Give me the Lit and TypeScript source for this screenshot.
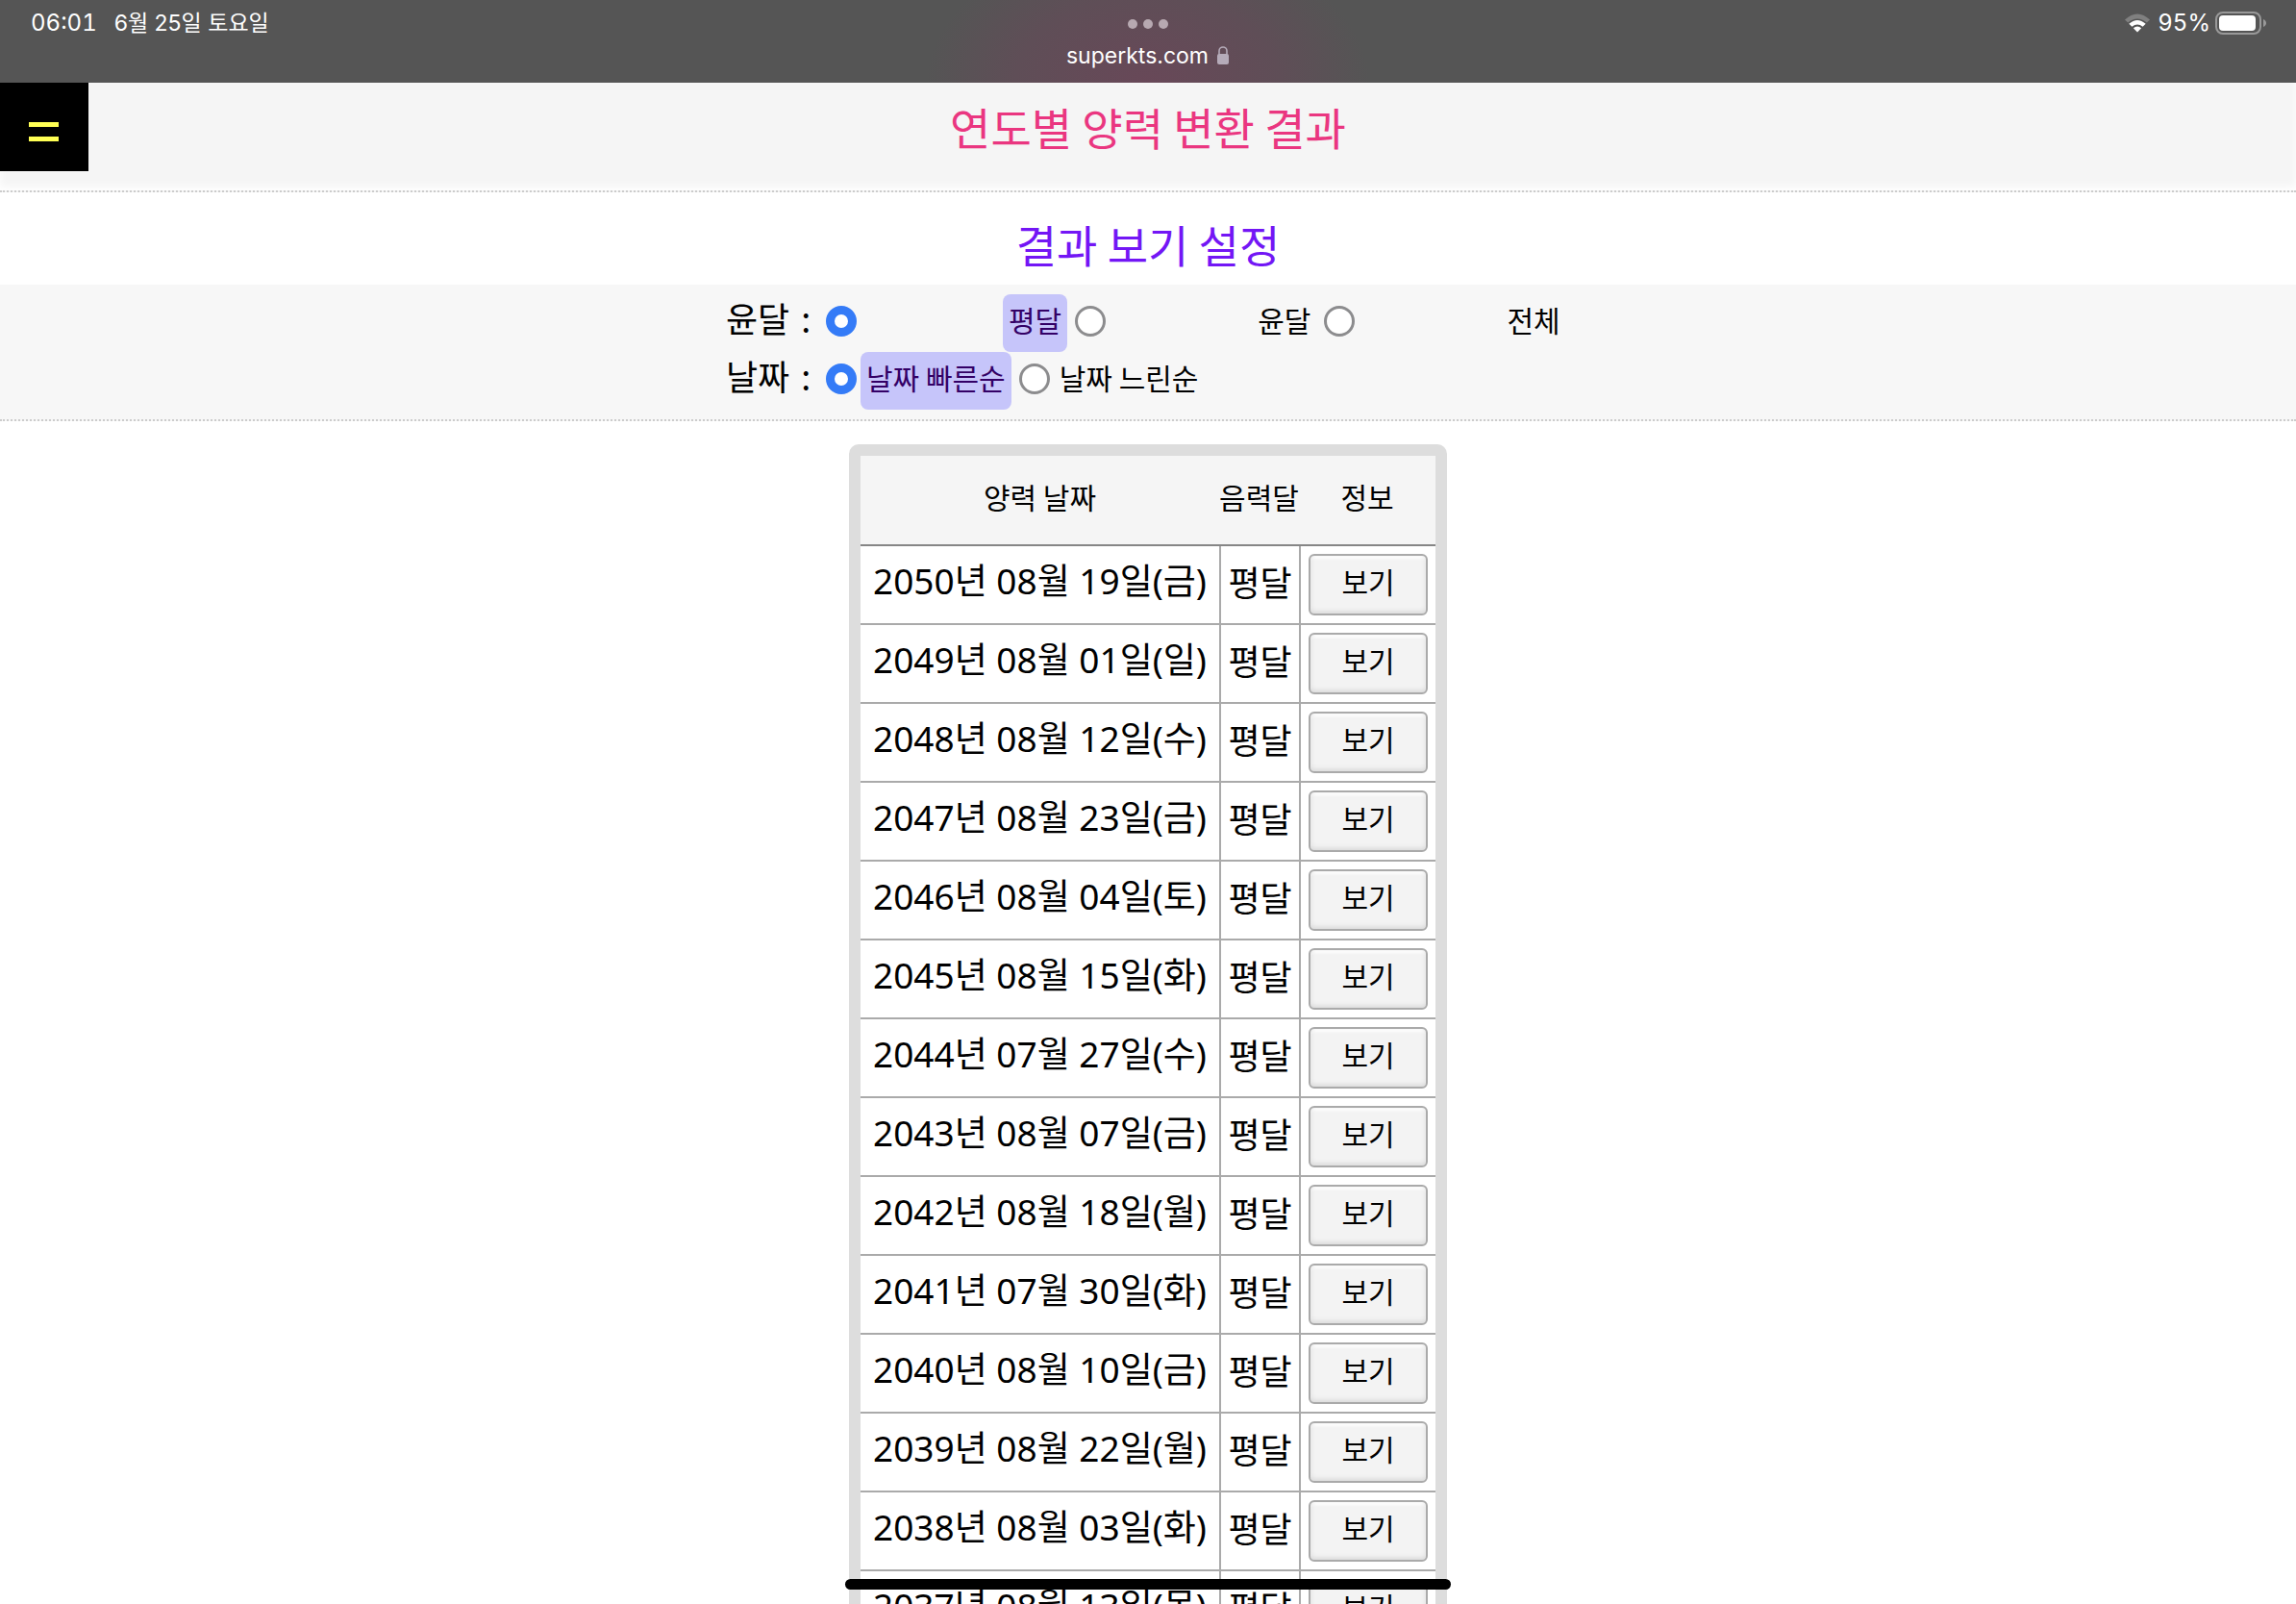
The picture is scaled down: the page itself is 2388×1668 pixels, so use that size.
import { LitElement, html, css, svg } from "lit";
import { customElement, property, state } from "lit/decorators.js";

interface Entry {
  date: string;
  month: string;
}

const DATES = [
  "2050년 08월 19일(금)",
  "2049년 08월 01일(일)",
  "2048년 08월 12일(수)",
  "2047년 08월 23일(금)",
  "2046년 08월 04일(토)",
  "2045년 08월 15일(화)",
  "2044년 07월 27일(수)",
  "2043년 08월 07일(금)",
  "2042년 08월 18일(월)",
  "2041년 07월 30일(화)",
  "2040년 08월 10일(금)",
  "2039년 08월 22일(월)",
  "2038년 08월 03일(화)",
  "2037년 08월 13일(목)",
];

const ENTRIES: Entry[] = DATES.map((date) => ({ date, month: "평달" }));

const wifi = svg`
  <path d="M1 7.500 Q14 -4.500 27 7.500 L23.800 10.600 Q14 2.200 4.200 10.600 Z" fill="#808080"/>
  <path d="M5.300 11.800 Q14 4 22.700 11.800 L19.600 14.800 Q14 10 8.400 14.800 Z" fill="#fff"/>
  <path d="M9.800 16.200 Q14 12.600 18.200 16.200 L14 20.400 Z" fill="#fff"/>`;

@customElement("status-bar")
export class StatusBar extends LitElement {
  static styles = css`
    :host {
      display: grid;
      grid-template-columns: 1fr auto 1fr;
      height: 86px;
      flex: none;
      box-sizing: border-box;
      padding: 0 30px;
      color: #fff;
      font: 23px/32px Inter, "Noto Sans CJK KR", sans-serif;
      background:
        radial-gradient(230px 150px at 50% 100%, #684858 0%, #5f4e57 60%, #555 100%),
        #555;
    }
    .side {
      display: flex;
      align-items: center;
      height: 32px;
      padding: 8px 0 0 2px;
      gap: 18px;
    }
    .number {
      font-size: 24px;
      font-variant-numeric: tabular-nums;
    }
    .end {
      justify-content: flex-end;
      gap: 5px;
    }
    .wifi {
      margin-right: 2px;
    }
    .middle {
      display: flex;
      flex-direction: column;
      align-items: center;
      padding-top: 20px;
      gap: 12px;
    }
    .dots {
      display: flex;
      gap: 6px;
    }
    .dot {
      width: 10px;
      height: 10px;
      border-radius: 50%;
      background: #b7a9b1;
    }
    .address {
      display: flex;
      align-items: center;
      gap: 8px;
    }
    svg {
      display: block;
    }
  `;

  render() {
    return html`
      <div class="side"><span class="number">06:01</span><span>6월 25일 토요일</span></div>
      <div class="middle">
        <div class="dots">
          <span class="dot"></span><span class="dot"></span><span class="dot"></span>
        </div>
        <div class="address">
          <span>superkts.com</span>
          <svg width="14" height="20" viewBox="0 0 14 20" aria-hidden="true">
            <path d="M3 9V5a4 4 0 0 1 8 0v4" fill="none" stroke="#b5abb9" stroke-width="1.6" />
            <rect x="1" y="8" width="12" height="11" rx="2" fill="#b5abb9" />
          </svg>
        </div>
      </div>
      <div class="side end">
        <svg class="wifi" width="28" height="22" viewBox="0 0 28 22" aria-hidden="true">${wifi}</svg>
        <span class="number">95%</span>
        <svg width="54" height="24" viewBox="0 0 54 24" aria-hidden="true">
          <rect x="1" y="1" width="46" height="22" rx="7" fill="none" stroke="#999" stroke-width="2" />
          <rect x="4" y="4" width="38" height="16" rx="4" fill="#fff" />
          <path d="M50 8c4 1.500 4 6.500 0 8z" fill="#999" />
        </svg>
      </div>
    `;
  }
}

@customElement("radio-row")
export class RadioRow extends LitElement {
  @property() caption = "";
  @property({ type: Array }) options: string[] = [];
  @property({ type: Boolean, reflect: true }) spread = false;
  @state() private selected = 0;

  static styles = css`
    .row {
      display: flex;
      align-items: center;
      height: 60px;
      margin: 0;
      padding: 0;
      border: 0;
    }
    .caption {
      display: flex;
      flex: none;
      gap: 12px;
      width: 104px;
      font-size: 36px;
      line-height: 48px;
      padding-bottom: 12px;
    }
    .dot {
      appearance: none;
      flex: none;
      width: 32px;
      height: 32px;
      margin: 0 0 4px;
      box-sizing: border-box;
      border: 3px solid #8c8c8e;
      border-radius: 50%;
      background: #fff;
    }
    .dot:checked {
      border: 9px solid #347bf7;
    }
    .label {
      height: 60px;
      line-height: 52px;
      padding: 0 6px;
      margin: 0 8px 0 4px;
      border-radius: 8px;
      font-size: 30px;
      white-space: nowrap;
    }
    :host([spread]) .label {
      margin-left: 152px;
    }
    .dot:checked + .label {
      background: #c6c5fa;
      color: #306;
    }
  `;

  render() {
    return html`
      <div class="row" role="radiogroup" aria-labelledby="caption">
        <span class="caption" id="caption"><span>${this.caption}</span><span>:</span></span>
        ${this.options.map(
          (text, i) => html`
            <input
              class="dot"
              type="radio"
              name="choice"
              id="choice-${i}"
              .checked=${i === this.selected}
              @change=${() => (this.selected = i)}
            />
            <label class="label" for="choice-${i}">${text}</label>
          `,
        )}
      </div>
    `;
  }
}

@customElement("result-table")
export class ResultTable extends LitElement {
  @property({ type: Array }) entries: Entry[] = [];

  static styles = css`
    :host {
      display: block;
      border: 12px solid #ddd;
      border-radius: 10px;
      background: #ddd;
    }
    .table {
      border-collapse: separate;
      border-spacing: 0;
      background: #fff;
      text-align: center;
      white-space: nowrap;
    }
    th {
      height: 94px;
      padding: 0 0 8px;
      box-sizing: border-box;
      background: #f5f5f5;
      border-bottom: 2px solid #868686;
      font-size: 30px;
      font-weight: 400;
      line-height: 40px;
    }
    td {
      height: 82px;
      box-sizing: border-box;
      padding: 0 0 8px;
      border-bottom: 2px solid #aaa;
      font-size: 36px;
      line-height: 48px;
    }
    td + td {
      border-left: 2px solid #aaa;
    }
    .date {
      width: 373px;
    }
    td.date {
      font-family: "Noto Sans", "Noto Sans CJK KR", sans-serif;
      font-size: 37px;
    }
    .month {
      width: 83px;
    }
    .info {
      width: 142px;
    }
    td.info {
      padding: 8px;
    }
    .view {
      display: block;
      width: 124px;
      height: 64px;
      margin: 0 auto;
      padding: 0 0 8px;
      border: 2px solid #aaa;
      border-radius: 6px;
      background: #f3f3f3;
      box-shadow: inset 0 -2px 5px #d8d8d8, inset 0 3px 3px #fff;
      color: #000;
      font: inherit;
      font-size: 30px;
      line-height: 40px;
    }
  `;

  render() {
    return html`
      <table class="table">
        <thead>
          <tr>
            <th class="date" scope="col">양력 날짜</th>
            <th class="month" scope="col">음력달</th>
            <th class="info" scope="col">정보</th>
          </tr>
        </thead>
        <tbody>
          ${this.entries.map(
            (entry) => html`
              <tr>
                <td class="date">${entry.date}</td>
                <td class="month">${entry.month}</td>
                <td class="info"><button class="view" type="button">보기</button></td>
              </tr>
            `,
          )}
        </tbody>
      </table>
    `;
  }
}

@customElement("app-root")
export class AppRoot extends LitElement {
  static styles = css`
    :host {
      display: flex;
      flex-direction: column;
      height: 100vh;
      position: relative;
      overflow: hidden;
      background: #fff;
      color: #000;
      font-family: "Noto Sans CJK KR", sans-serif;
    }
    .page {
      flex: 1;
      min-height: 0;
      overflow-y: auto;
      scrollbar-width: none;
    }
    .header {
      display: grid;
      grid-template-columns: 92px 1fr 92px;
      align-items: start;
      height: 112px;
      background: #f5f5f5;
      box-shadow: inset 0 -4px 8px #fff;
      border-bottom: 2px dotted #ccc;
    }
    .menu {
      display: grid;
      place-content: center;
      gap: 10px;
      width: 92px;
      height: 92px;
      padding: 9px 2px 0 0;
      border: 0;
      background: #000;
    }
    .bar {
      width: 31px;
      height: 5px;
      background: #ffff54;
    }
    .title,
    .subtitle {
      margin: 0;
      text-align: center;
      font-size: 46px;
      line-height: 64px;
      font-weight: 400;
    }
    .title {
      padding-top: 13px;
      color: #ea3680;
    }
    .subtitle {
      padding: 21px 0 11px;
      color: #7316f5;
    }
    .filters {
      display: flex;
      justify-content: center;
      padding: 10px 0;
      background: #f7f7f7;
      border-bottom: 2px dotted #ccc;
    }
    .group {
      width: 878px;
    }
    .results {
      display: flex;
      justify-content: center;
      padding-top: 24px;
    }
    .home {
      position: absolute;
      left: 50%;
      bottom: 15px;
      width: 630px;
      height: 11px;
      margin-left: -315px;
      border-radius: 6px;
      background: #000;
    }
  `;

  render() {
    return html`
      <status-bar></status-bar>
      <main class="page">
        <header class="header">
          <button class="menu" type="button" aria-label="메뉴">
            <span class="bar"></span><span class="bar"></span>
          </button>
          <h1 class="title">연도별 양력 변환 결과</h1>
        </header>
        <h2 class="subtitle">결과 보기 설정</h2>
        <section class="filters">
          <div class="group">
            <radio-row caption="윤달" .options=${["평달", "윤달", "전체"]} spread></radio-row>
            <radio-row caption="날짜" .options=${["날짜 빠른순", "날짜 느린순"]}></radio-row>
          </div>
        </section>
        <section class="results">
          <result-table .entries=${ENTRIES}></result-table>
        </section>
      </main>
      <div class="home"></div>
    `;
  }
}
